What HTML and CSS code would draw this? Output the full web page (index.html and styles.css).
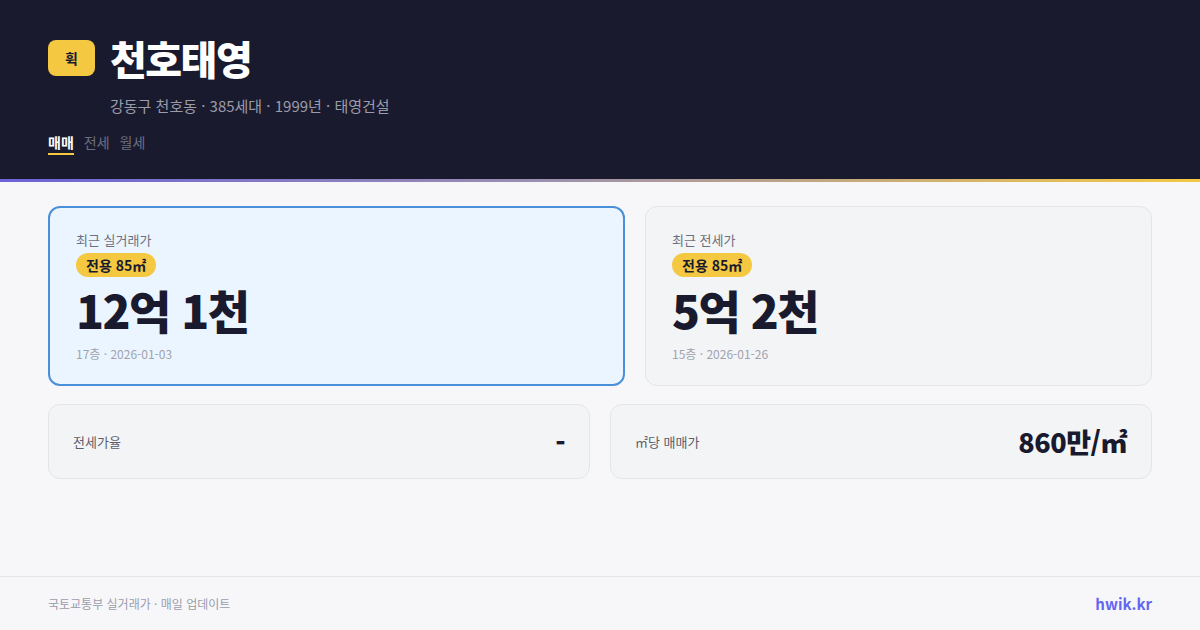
FILE: index.html
```html
<!DOCTYPE html>
<html lang="ko">
<head>
<meta charset="utf-8">
<link rel="stylesheet" href="styles.css">
</head>
<body>
<div class="page">
  <header class="header">
    <div class="title-row">
      <div class="logo">휙</div>
      <h1 class="title">천호태영</h1>
    </div>
    <div class="subtitle">강동구 천호동 · 385세대 · 1999년 · 태영건설</div>
    <nav class="tabs">
      <span class="tab active">매매</span>
      <span class="tab">전세</span>
      <span class="tab">월세</span>
    </nav>
  </header>
  <div class="accent"></div>
  <main class="main">
    <div class="top-row">
      <div class="card card-primary">
        <div class="card-label">최근 실거래가</div>
        <span class="badge">전용 85㎡</span>
        <div class="price">12억 1천</div>
        <div class="meta">17층 · 2026-01-03</div>
      </div>
      <div class="card">
        <div class="card-label">최근 전세가</div>
        <span class="badge">전용 85㎡</span>
        <div class="price">5억 2천</div>
        <div class="meta">15층 · 2026-01-26</div>
      </div>
    </div>
    <div class="bottom-row">
      <div class="stat">
        <span class="stat-label">전세가율</span>
        <span class="stat-value">-</span>
      </div>
      <div class="stat">
        <span class="stat-label">㎡당 매매가</span>
        <span class="stat-value">860만/㎡</span>
      </div>
    </div>
  </main>
  <footer class="footer">
    <span class="footer-note">국토교통부 실거래가 · 매일 업데이트</span>
    <span class="brand">hwik.kr</span>
  </footer>
</div>
</body>
</html>
```

FILE: styles.css
```css
* { box-sizing: border-box; margin: 0; padding: 0; }
html, body {
  width: 1200px;
  height: 630px;
  overflow: hidden;
  background: #f7f7f9;
  font-family: "Noto Sans CJK KR", "Noto Sans", sans-serif;
}
.page {
  width: 1200px;
  height: 630px;
  display: flex;
  flex-direction: column;
}
.header {
  background: #1a1a2e;
  height: 179px;
  padding: 38px 48px 0;
}
.title-row {
  display: flex;
  align-items: center;
  gap: 15px;
  height: 40px;
}
.logo {
  width: 47px;
  height: 36px;
  border-radius: 8px;
  background: #f5c842;
  color: #1a1a2e;
  font-weight: 700;
  font-size: 14px;
  display: flex;
  align-items: center;
  justify-content: center;
}
.title {
  color: #ffffff;
  font-size: 40px;
  font-weight: 800;
  letter-spacing: -1.5px;
  line-height: 40px;
}
.subtitle {
  margin-top: 18px;
  margin-left: 62px;
  color: #9a9cab;
  font-size: 15px;
  line-height: 20px;
}
.tabs {
  display: flex;
  gap: 10px;
  margin-top: 17px;
}
.tab {
  color: #6b6e80;
  font-size: 14px;
  line-height: 18px;
  padding-bottom: 2px;
  border-bottom: 2px solid transparent;
}
.tab.active {
  color: #ffffff;
  font-weight: 700;
  border-bottom-color: #f5c842;
}
.accent {
  height: 3px;
  background: linear-gradient(90deg, #6b63d9 0%, #9b8fb0 45%, #f5c842 100%);
}
.main {
  flex: 1;
  padding: 24px 48px 0;
  display: flex;
  flex-direction: column;
  gap: 18px;
}
.top-row {
  display: grid;
  grid-template-columns: 577fr 507fr;
  gap: 20px;
}
.card {
  height: 180px;
  border-radius: 12px;
  background: #f3f4f6;
  border: 1px solid #e4e5e9;
  padding: 23px 26px;
  display: flex;
  flex-direction: column;
  align-items: flex-start;
}
.card-primary {
  background: #ebf5ff;
  border: 2px solid #4a8fd9;
  padding: 22px 26px;
}
.card-label {
  color: #6b7080;
  font-size: 13px;
  line-height: 20px;
}
.badge {
  margin-top: 3px;
  background: #f5c842;
  color: #1a1a2e;
  font-weight: 700;
  font-size: 14px;
  line-height: 24px;
  padding: 0 10px;
  border-radius: 12px;
}
.price {
  margin-top: 6px;
  color: #1a1a2e;
  font-size: 46px;
  font-weight: 800;
  letter-spacing: -1.5px;
  line-height: 52px;
}
.meta {
  margin-top: 10px;
  color: #a0a3ad;
  font-size: 12px;
  line-height: 18px;
}
.bottom-row {
  display: grid;
  grid-template-columns: 1fr 1fr;
  gap: 20px;
}
.stat {
  height: 75px;
  border-radius: 12px;
  background: #f3f4f6;
  border: 1px solid #e4e5e9;
  padding: 0 24px;
  display: flex;
  align-items: center;
  justify-content: space-between;
}
.stat-label {
  color: #5b5f6b;
  font-size: 13px;
}
.stat-value {
  color: #1a1a2e;
  font-size: 27px;
  font-weight: 800;
  letter-spacing: -0.5px;
}
.footer {
  height: 54px;
  border-top: 1px solid #e4e5e9;
  padding: 0 48px;
  display: flex;
  align-items: center;
  justify-content: space-between;
}
.footer-note {
  color: #9a9cab;
  font-size: 12px;
}
.brand {
  color: #6366f1;
  font-size: 15px;
  font-weight: 700;
}
```
